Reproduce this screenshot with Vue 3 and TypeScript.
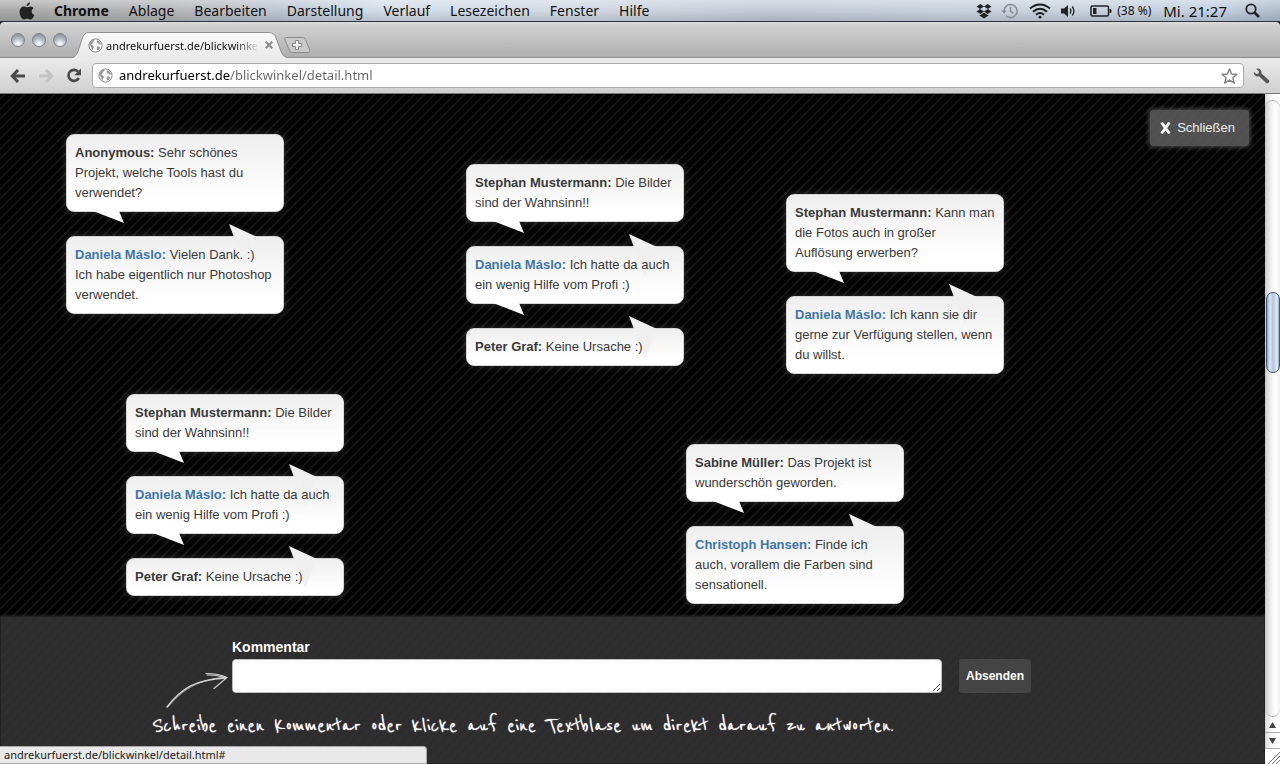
<script setup lang="ts">
import { ref } from 'vue'

interface Message {
  author: string
  text: string
  reply?: boolean
}

interface Thread {
  x: number
  y: number
  messages: Message[]
}

const menus: string[] = ['Ablage', 'Bearbeiten', 'Darstellung', 'Verlauf', 'Lesezeichen', 'Fenster', 'Hilfe']

const threads: Thread[] = [
  {
    x: 66,
    y: 40,
    messages: [
      { author: 'Anonymous', text: 'Sehr schönes Projekt, welche Tools hast du verwendet?' },
      { author: 'Daniela Máslo', text: 'Vielen Dank. :) Ich habe eigentlich nur Photoshop verwendet.', reply: true },
    ],
  },
  {
    x: 466,
    y: 70,
    messages: [
      { author: 'Stephan Mustermann', text: 'Die Bilder sind der Wahnsinn!!' },
      { author: 'Daniela Máslo', text: 'Ich hatte da auch ein wenig Hilfe vom Profi :)', reply: true },
      { author: 'Peter Graf', text: 'Keine Ursache :)' },
    ],
  },
  {
    x: 786,
    y: 100,
    messages: [
      { author: 'Stephan Mustermann', text: 'Kann man die Fotos auch in großer Auflösung erwerben?' },
      { author: 'Daniela Máslo', text: 'Ich kann sie dir gerne zur Verfügung stellen, wenn du willst.', reply: true },
    ],
  },
  {
    x: 126,
    y: 300,
    messages: [
      { author: 'Stephan Mustermann', text: 'Die Bilder sind der Wahnsinn!!' },
      { author: 'Daniela Máslo', text: 'Ich hatte da auch ein wenig Hilfe vom Profi :)', reply: true },
      { author: 'Peter Graf', text: 'Keine Ursache :)' },
    ],
  },
  {
    x: 686,
    y: 350,
    messages: [
      { author: 'Sabine Müller', text: 'Das Projekt ist wunderschön geworden.' },
      { author: 'Christoph Hansen', text: 'Finde ich auch, vorallem die Farben sind sensationell.', reply: true },
    ],
  },
]

const address = ref('andrekurfuerst.de/blickwinkel/detail.html')
const comment = ref('')
</script>

<template>
  <div class="screen">
    <header class="menubar">
      <button class="apple" aria-label="Apple">
        <svg width="16" height="18" viewBox="0 0 16 18" fill="#222">
          <path d="M10.900.3c.1 1.900-1.500 3.700-3.300 3.700C7.400 2.200 9.100.500 10.900.3z" />
          <path d="M8 5.200c.8 0 1.700-.8 3.200-.8 1.400 0 2.700.7 3.400 1.800-2.800 1.700-2.400 5.500.7 6.700-.8 2.200-2.300 4.600-4 4.600-1.200 0-1.700-.7-3.100-.7s-2 .7-3.100.7C2.700 17.500.6 13.400.6 10.100c0-3.600 2.200-5.600 4.400-5.600 1.300 0 2.200.7 3 .7z" />
        </svg>
      </button>
      <nav class="menus">
        <button class="app-name">Chrome</button>
        <button v-for="m in menus" :key="m">{{ m }}</button>
      </nav>
      <div class="status">
        <svg width="16" height="16" viewBox="0 0 16 16" fill="#222">
          <path d="M4.500 1 8 3.500 4 6 .5 3.500zM11.500 1 15.500 3.500 12 6 8 3.500zM.5 8.500 4 6 8 8.500 4.500 11zM15.500 8.500 12 6 8 8.500 11.500 11zM3.500 11.700 4.600 12 8 9.500 11.400 12 12.500 11.700V12.600L8 15.500 3.500 12.600z" />
        </svg>
        <svg class="clock" width="18" height="16" viewBox="0 0 18 16" fill="none" stroke="#888d93" stroke-width="1.500">
          <path d="M3 8A6.500 6.500 0 1 1 5 12.800M9.500 4v4.300l3 1.700" />
          <path d="M.3 7.500h5.400L3 10.500z" fill="#888d93" stroke="none" />
        </svg>
        <svg class="wifi" width="22" height="16" viewBox="0 0 22 16" fill="none" stroke="#1c1c1c" stroke-width="2">
          <path d="M1 5.500Q11-2.500 21 5.500M4 8.700Q11 2.800 18 8.700M7 11.700Q11 8.300 15 11.700" />
          <circle cx="11" cy="14" r="1.500" fill="#1c1c1c" stroke="none" />
        </svg>
        <svg width="16" height="14" viewBox="0 0 16 14" fill="none" stroke="#222" stroke-width="1.300">
          <path d="M1 4.500h3L8 1v12L4 9.500H1z" fill="#222" stroke="none" />
          <path d="M10 4.500q1.800 2.500 0 5M12.300 2.500q3.200 4.500 0 9" />
        </svg>
        <svg class="battery" width="22" height="12" viewBox="0 0 22 12">
          <rect x="1" y="1" width="17.500" height="10" rx="1.500" fill="none" stroke="#222" stroke-width="1.500" />
          <path d="M3 3h3.500v6H3zM19.500 4h1.200l.8.8v2.400l-.8.8h-1.200z" fill="#222" />
        </svg>
        <span class="percent">(38 %)</span>
        <span class="time">Mi. 21:27</span>
        <button class="spotlight" aria-label="Spotlight">
          <svg width="15" height="15" viewBox="0 0 15 15" fill="none" stroke="#222">
            <circle cx="6" cy="6" r="4.700" stroke-width="1.800" />
            <path d="M9.500 9.500 14 14" stroke-width="2.600" />
          </svg>
        </button>
      </div>
    </header>

    <div class="tabstrip">
      <div class="lights">
        <button aria-label="Schließen" />
        <button aria-label="Minimieren" />
        <button aria-label="Vergrößern" />
      </div>
      <div class="tab">
        <svg class="tab-shape" viewBox="0 0 220 26" preserveAspectRatio="none">
          <defs>
            <linearGradient id="tabFill" x1="0" y1="0" x2="0" y2="1">
              <stop offset="0" stop-color="#f9f9f9" />
              <stop offset="1" stop-color="#e9e9e9" />
            </linearGradient>
          </defs>
          <path d="M0 26C5 25.500 6 24 8 19.500L12.500 6Q14.500.5 19 .5H201Q206 .5 208 6L213 19.500Q215 25 220 26z" fill="url(#tabFill)" />
          <path d="M0 25.500C5 25.500 6 24 8 19.500L12.500 6Q14.500.5 19 .5H201Q206 .5 208 6L213 19.500Q215 25 220 25.500" fill="none" stroke="#8e8e8e" />
        </svg>
        <svg class="globe" width="15" height="15" viewBox="0 0 15 15">
          <circle cx="7.500" cy="7.500" r="6.600" fill="#fcfcfc" stroke="#858585" />
          <path d="M2.200 4.200 4.200 2.200 6.500 1.800 6 3.200 4.800 4.200 4.600 5.400 3.200 6.200 5.300 8 6.200 9.300 5 10.600 4.600 12.600 3.600 11.200 3 9 1.500 7.200zM9 2.200 11.300 3.200 13.200 6 12 6.800 10.600 5.600 9.200 5.300 8.500 3.800zM9 8.300 11 8.500 12.400 9.600 10.900 12 9.300 12.600 8.600 10.500z" fill="#999" />
        </svg>
        <span class="tab-title">andrekurfuerst.de/blickwinkel</span>
        <button class="tab-close" aria-label="Tab schließen">
          <svg width="8" height="8" viewBox="0 0 8 8" stroke="#8a8a8a" stroke-width="2"><path d="M.7.7l6.600 6.600M7.300.7.7 7.300" /></svg>
        </button>
      </div>
      <button class="new-tab" aria-label="Neuer Tab">
        <svg width="27" height="16" viewBox="0 0 27 16">
          <path d="M2.500.5H18.500Q20.500.5 21.500 2.500L25.800 13Q26.500 15.500 24 15.500H8.500Q6.500 15.500 5.500 13.500L1 3Q.2.500 2.500.5z" fill="#c9c9c9" stroke="#8b8b8b" />
          <path d="M11.500 3.500h3v3h3v3h-3v3h-3v-3h-3v-3h3z" fill="#f6f6f6" stroke="#858585" />
        </svg>
      </button>
    </div>

    <div class="toolbar">
      <button aria-label="Zurück">
        <svg width="16" height="14" viewBox="0 0 16 14" fill="none" stroke="#4a4a4a" stroke-width="3"><path d="M15 7H3M8 1 2.300 7 8 13" /></svg>
      </button>
      <button aria-label="Vorwärts">
        <svg width="16" height="14" viewBox="0 0 16 14" fill="none" stroke="#c3c3c3" stroke-width="3"><path d="M1 7h12M8 1l5.700 6L8 13" /></svg>
      </button>
      <button aria-label="Neu laden">
        <svg width="16" height="15" viewBox="0 0 16 15"><path d="M12 3.600A5.500 5.500 0 1 0 12.800 10" fill="none" stroke="#4a4a4a" stroke-width="2.600" /><path d="M15 .5v6.700H8.300z" fill="#4a4a4a" /></svg>
      </button>
      <div class="omnibox">
        <svg class="globe" width="15" height="15" viewBox="0 0 15 15">
          <circle cx="7.500" cy="7.500" r="6.600" fill="#fcfcfc" stroke="#858585" />
          <path d="M2.200 4.200 4.200 2.200 6.500 1.800 6 3.200 4.800 4.200 4.600 5.400 3.200 6.200 5.300 8 6.200 9.300 5 10.600 4.600 12.600 3.600 11.200 3 9 1.500 7.200zM9 2.200 11.300 3.200 13.200 6 12 6.800 10.600 5.600 9.200 5.300 8.500 3.800zM9 8.300 11 8.500 12.400 9.600 10.900 12 9.300 12.600 8.600 10.500z" fill="#999" />
        </svg>
        <input v-model="address" type="text" aria-label="Adresse" />
        <button aria-label="Lesezeichen hinzufügen">
          <svg width="17" height="16" viewBox="0 0 17 16" fill="none" stroke="#858585" stroke-width="1.500" stroke-linejoin="round"><path d="m8.500 1 2.100 4.900 5.400.4-4.100 3.500 1.300 5.200-4.700-2.900-4.700 2.900 1.300-5.200L1 6.300l5.400-.4z" /></svg>
        </button>
      </div>
      <button class="wrench" aria-label="Einstellungen">
        <svg width="17" height="16" viewBox="0 0 17 16" fill="#555"><path d="M3.200.7C5.900-.2 9 1.700 8.500 5.400l7.500 6.900q.9 1-.1 2.100l-.8.7q-1 .7-1.900-.1L6 8.300C3.300 9 .6 7.200.7 4L3.500 6 5.600 5.500 6 3.300z" /></svg>
      </button>
    </div>

    <div class="window">
      <main class="page">
        <section class="stage">
          <button class="close"><svg width="11" height="12" viewBox="0 0 11 12" stroke="#fff" stroke-width="2.800"><path d="M1.500.5l8 11M9.500.5l-8 11" /></svg>Schließen</button>
          <article v-for="(t, i) in threads" :key="i" class="thread" :style="{ left: t.x + 'px', top: t.y + 'px' }">
            <a v-for="(m, j) in t.messages" :key="j" class="bubble" href="#">
              <svg v-if="j > 0" class="tail-up" width="30" height="42" viewBox="0 0 30 42">
                <path d="M0 0 28 13 16 42z" fill="#efefef" />
              </svg>
              <svg v-if="j < t.messages.length - 1" class="tail-down" width="31" height="12" viewBox="0 0 31 12">
                <path d="M0 0H26L31 12z" fill="#fff" />
              </svg>
              <strong :class="{ reply: m.reply }">{{ m.author }}:</strong> <span>{{ m.text }}</span>
            </a>
          </article>
        </section>

        <section class="composer">
          <form class="form" @submit.prevent>
            <label for="comment">Kommentar</label>
            <div class="row">
              <textarea id="comment" v-model="comment" />
              <button type="submit">Absenden</button>
            </div>
            <svg class="arrow" width="66" height="38" viewBox="0 0 66 38" fill="none" stroke="#d2d2d2" stroke-linecap="round">
              <path d="M2 36C17 17 29 9 61 7" stroke-width="1.500" />
              <path d="M3 36C17 19 32 9 60 6" stroke-width=".7" />
              <path d="M41 2.500Q54 2.500 62 6.500L49 17.500M42 4Q54 4 60 7" stroke-width="1.200" />
            </svg>
            <p class="hint">Schreibe einen Kommentar oder klicke auf eine Textblase um direkt darauf zu antworten.</p>
          </form>
        </section>
        <div class="link-status">andrekurfuerst.de/blickwinkel/detail.html#</div>
      </main>

      <aside class="scrollbar">
        <div class="track"><div class="thumb" /></div>
        <button aria-label="Nach oben"><svg width="7" height="6" viewBox="0 0 7 6"><path d="M3.500 0 7 6H0z" fill="#444" /></svg></button>
        <button aria-label="Nach unten"><svg width="7" height="6" viewBox="0 0 7 6"><path d="M0 0h7L3.500 6z" fill="#444" /></svg></button>
        <svg class="grip" width="15" height="15" viewBox="0 0 15 15" stroke="#777"><path d="M3 15 15 3M7 15l8-8M11 15l4-4" /></svg>
      </aside>
    </div>
  </div>
</template>

<style>
body {
  margin: 0;
  background: #000;
}
</style>

<style scoped>
.screen {
  display: flex;
  flex-direction: column;
  min-height: 100vh;
  font-family: "Lucida Grande", "Noto Sans", "Open Sans", sans-serif;
  color: #111;
}
button {
  display: flex;
  align-items: center;
  justify-content: center;
  padding: 0;
  border: 0;
  background: none;
  font: inherit;
  color: inherit;
}
svg {
  display: block;
  flex: none;
}

.menubar {
  display: flex;
  align-items: center;
  height: 22px;
  box-sizing: border-box;
  padding: 0 20px 0 19px;
  border-bottom: 1px solid #2c3340;
  background:
    linear-gradient(180deg, rgba(255, 255, 255, 0.35), rgba(255, 255, 255, 0) 50%, rgba(0, 0, 0, 0.12)),
    linear-gradient(90deg, #a9a9a9, #b4b5b7 13%, #bcc6d3 22%, #d3dce7 30%, #d0d8e2 45%, #c2cad5 60%, #c9d2dd 80%, #c2d0e0 95%, #aebccb);
  font-size: 14px;
  white-space: nowrap;
}
.menus {
  display: flex;
  gap: 20px;
  margin-left: 19px;
}
.app-name {
  font-weight: 700;
}
.status {
  display: flex;
  align-items: center;
  margin-left: auto;
}
.clock {
  margin-left: 9px;
}
.wifi {
  margin: 0 9px 0 10px;
}
.battery {
  margin-left: 14px;
}
.percent {
  margin-left: 5px;
  font-size: 12px;
}
.time {
  margin: 0 18px 0 12px;
  font-size: 15px;
}

.tabstrip {
  display: flex;
  align-items: flex-end;
  height: 36px;
  box-sizing: border-box;
  border-bottom: 1px solid #8b8b8b;
  border-radius: 4px 4px 0 0;
  background: linear-gradient(#dcdcdc, #d0d0d0 10%, #aeaeae);
}
.lights {
  display: flex;
  gap: 7px;
  padding: 0 3px 10px 11px;
}
.lights button {
  width: 14px;
  height: 14px;
  border: 1px solid #7d848d;
  border-radius: 50%;
  background: radial-gradient(circle at 50% 85%, #eef3f8 15%, #b0b7bf 50%, #7c858f 100%);
}
.tab {
  position: relative;
  display: flex;
  align-items: center;
  width: 218px;
  height: 26px;
  box-sizing: border-box;
  margin-bottom: -1px;
  padding: 0 15px 0 18px;
}
.tab-shape {
  position: absolute;
  inset: 0;
  width: 100%;
  height: 100%;
}
.tab > .globe,
.tab-title,
.tab-close {
  position: relative;
}
.tab-title {
  flex: 1;
  min-width: 0;
  margin-left: 3px;
  overflow: hidden;
  font-size: 11px;
  white-space: nowrap;
  -webkit-mask-image: linear-gradient(90deg, #000 85%, transparent);
  mask-image: linear-gradient(90deg, #000 85%, transparent);
}
.tab-close {
  margin: 0 0 0 6px;
}
.new-tab {
  margin: 0 0 4px -4px;
}

.toolbar {
  display: flex;
  align-items: center;
  gap: 12px;
  height: 36px;
  box-sizing: border-box;
  padding: 0 10px;
  border-bottom: 1px solid #777;
  background: linear-gradient(#ebebeb, #cfcfcf);
}
.omnibox {
  display: flex;
  flex: 1;
  align-items: center;
  height: 25px;
  box-sizing: border-box;
  margin-left: -2px;
  padding: 0 5px;
  border: 1px solid #aaa;
  border-radius: 4px;
  background: #fff;
}
.omnibox input {
  flex: 1;
  min-width: 0;
  margin: 0 0 0 6px;
  padding: 0 0 2px;
  border: 0;
  outline: 0;
  background: linear-gradient(90deg, #000 111px, #666 111px);
  -webkit-background-clip: text;
  background-clip: text;
  -webkit-text-fill-color: transparent;
  font: 13px "Lucida Grande", "Noto Sans", sans-serif;
}
.wrench {
  margin-left: -3px;
}

.window {
  display: flex;
  flex: 1;
}
.page {
  position: relative;
  display: flex;
  flex: 1;
  flex-direction: column;
  min-width: 0;
  overflow: hidden;
  background: linear-gradient(135deg, #020202 17%, #131313 20% 30%, #020202 33% 67%, #131313 70% 80%, #020202 83%) 0 0 / 10px 10px;
  font-family: Helvetica, "Liberation Sans", Arial, sans-serif;
  font-size: 13px;
  line-height: 20px;
}
.stage {
  position: relative;
  flex: 1;
  min-height: 522px;
}
.close {
  position: absolute;
  top: 16px;
  right: 16px;
  gap: 6px;
  padding: 8px 14px 8px 10px;
  border-radius: 3px;
  background: rgba(100, 100, 100, 0.8);
  box-shadow: 0 0 5px 1px rgba(130, 130, 130, 0.6);
  color: #eee;
}
.thread {
  position: absolute;
  display: flex;
  flex-direction: column;
  gap: 24px;
  width: 218px;
}
.bubble {
  position: relative;
  padding: 8px;
  border: 1px solid #d5d5d5;
  border-radius: 8px;
  background: linear-gradient(#eee, #fff 85%);
  box-shadow: 0 0 10px rgba(255, 255, 255, 0.18);
  color: #3a3a3a;
  text-decoration: none;
}
.tail-up {
  position: absolute;
  top: -13px;
  left: 162px;
}
.tail-down {
  position: absolute;
  bottom: -12px;
  left: 26px;
}
.bubble strong,
.bubble span {
  position: relative;
}
.bubble .reply {
  color: #3d76ac;
}

.composer {
  min-height: 148px;
  box-sizing: border-box;
  padding: 20px 17px 0 15px;
  border: 1px solid #222;
  background: rgba(56, 56, 56, 0.8);
  box-shadow: 0 0 3px rgba(70, 70, 70, 0.8);
}
.form {
  position: relative;
  max-width: 799px;
  margin: 0 auto;
}
.form label {
  display: block;
  color: #fff;
  font-size: 14px;
  font-weight: 700;
}
.row {
  display: flex;
  gap: 17px;
  margin-top: 2px;
}
.row textarea {
  flex: 1;
  height: 34px;
  box-sizing: border-box;
  padding: 6px;
  border: 1px solid #bbb;
  border-radius: 4px;
  background: #fff;
  font: inherit;
}
.row button {
  width: 72px;
  height: 34px;
  border-radius: 3px;
  background: #444;
  color: #fff;
  font-size: 12px;
  font-weight: 700;
}
.arrow {
  position: absolute;
  top: 34px;
  left: -67px;
}
.hint {
  margin: 17px 0 0 -80px;
  color: #fff;
  font-family: "Reenie Beanie", "Shadows Into Light", "Nothing You Could Do", Lato, sans-serif;
  font-size: 24px;
  line-height: 32px;
  text-shadow: 0 0 1px #fff;
  white-space: nowrap;
}
.link-status {
  position: absolute;
  bottom: 0;
  left: 0;
  width: 427px;
  height: 18px;
  box-sizing: border-box;
  padding-left: 4px;
  border: solid #aaa;
  border-width: 1px 1px 1px 0;
  border-radius: 0 4px 0 0;
  background: #e9e9e9;
  color: #222;
  font: 11px/16px "Lucida Grande", "Noto Sans", sans-serif;
}

.scrollbar {
  display: flex;
  flex-direction: column;
  width: 15px;
  background: linear-gradient(90deg, #d8d8d8, #f6f6f6 40%, #fff);
}
.track {
  display: grid;
  flex: 1;
  grid-template-rows: 191fr 81fr 343fr;
  box-sizing: border-box;
  margin-top: 6px;
  border: solid #b5b5b5;
  border-width: 1px 0;
  border-radius: 8px;
  background: linear-gradient(90deg, #c9c9c9, #ececec 35%, #fff 70%, #f0f0f0);
}
.thumb {
  grid-row: 2;
  margin-left: 1px;
  border: 1px solid #45597a;
  border-radius: 7px;
  background: linear-gradient(90deg, #8ba0bb, #dce8f3 25%, #b5c5d4 50%, #dfeefa 85%, #879cb4);
}
.scrollbar button {
  height: 16px;
  border-bottom: 1px solid #aaa;
}
.grip {
  background: #fff;
}
</style>
